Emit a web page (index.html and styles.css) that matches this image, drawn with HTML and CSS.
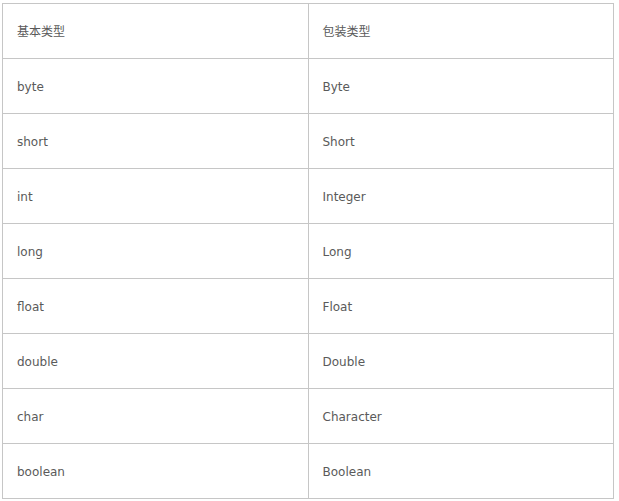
FILE: index.html
```html
<!DOCTYPE html>
<html>
<head>
<meta charset="utf-8">
<link rel="stylesheet" href="styles.css">
</head>
<body>
<table class="types">
<tr class="head"><td>基本类型</td><td>包装类型</td></tr>
<tr><td>byte</td><td>Byte</td></tr>
<tr><td>short</td><td>Short</td></tr>
<tr><td>int</td><td>Integer</td></tr>
<tr><td>long</td><td>Long</td></tr>
<tr><td>float</td><td>Float</td></tr>
<tr><td>double</td><td>Double</td></tr>
<tr><td>char</td><td>Character</td></tr>
<tr><td>boolean</td><td>Boolean</td></tr>
</table>
</body>
</html>
```
FILE: styles.css
```css
html, body {
  margin: 0;
  padding: 0;
  background: #fff;
}
body {
  padding: 3px 0 0 2px;
  font-family: "DejaVu Sans", Verdana, "Noto Sans CJK SC", sans-serif;
  font-size: 12px;
  color: #5a5a5a;
}
.types {
  border-collapse: collapse;
  width: 612px;
}
.types td {
  border: 1px solid #c6c6c6;
  height: 55px;
  padding: 2px 0 0 14px;
  vertical-align: middle;
  width: 50%;
  box-sizing: border-box;
}
.types .head td {
  padding-top: 0;
  padding-bottom: 2px;
}
```
